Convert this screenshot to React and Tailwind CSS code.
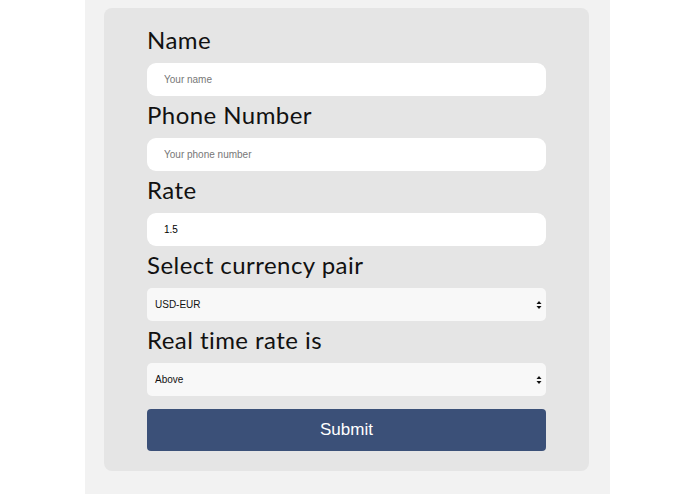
import React from "react";

const labelCls =
  "block pt-1 pb-2 text-[24px] leading-[30px] tracking-[0.45px] text-[#111] font-normal [font-variant-ligatures:none]";

function Arrows() {
  return (
    <svg width="6" height="9" viewBox="0 0 6 9" className="absolute right-[4px] top-1/2 -translate-y-1/2 pointer-events-none">
      <path d="M3 0.5 L5.5 3.6 L0.5 3.6 Z" fill="#111" />
      <path d="M3 8.5 L5.5 5.4 L0.5 5.4 Z" fill="#111" />
    </svg>
  );
}

export default function App() {
  return (
    <div className="w-[695px] h-[494px] bg-white flex" style={{ fontFamily: "Lato, 'Noto Sans', sans-serif" }}>
      <div className="ml-[85px] w-[525px] h-[494px] bg-[#f2f2f2] pt-2 pl-[19px]">
        <div className="w-[485px] bg-[#e5e5e5] rounded-[8px] pt-[13px] pb-[20px] px-[43px]">
          <label className={labelCls}>Name</label>
          <input
            className="block w-[399px] h-[33px] rounded-[9px] bg-white px-[17px] text-[10px] text-black placeholder:text-[#777] outline-none"
            placeholder="Your name"
            style={{ fontFamily: "'Liberation Sans', Arial, sans-serif" }}
          />
          <label className={labelCls}>Phone Number</label>
          <input
            className="block w-[399px] h-[33px] rounded-[9px] bg-white px-[17px] text-[10px] text-black placeholder:text-[#777] outline-none"
            placeholder="Your phone number"
            style={{ fontFamily: "'Liberation Sans', Arial, sans-serif" }}
          />
          <label className={labelCls}>Rate</label>
          <input
            className="block w-[399px] h-[33px] rounded-[9px] bg-white px-[17px] text-[10px] text-black outline-none"
            defaultValue="1.5"
            style={{ fontFamily: "'Liberation Sans', Arial, sans-serif" }}
          />
          <label className={labelCls}>Select currency pair</label>
          <div className="relative w-[399px] h-[33px] rounded-[5px] bg-[#f8f8f8] flex items-center px-[8px]">
            <span className="text-[10px] text-[#111]" style={{ fontFamily: "'Liberation Sans', Arial, sans-serif" }}>USD-EUR</span>
            <Arrows />
          </div>
          <label className={labelCls}>Real time rate is</label>
          <div className="relative w-[399px] h-[33px] rounded-[5px] bg-[#f8f8f8] flex items-center px-[8px]">
            <span className="text-[10px] text-[#111]" style={{ fontFamily: "'Liberation Sans', Arial, sans-serif" }}>Above</span>
            <Arrows />
          </div>
          <button
            className="mt-[13px] block w-[399px] h-[42px] rounded-[4px] bg-[#3b5078] text-white text-[17px] text-center"
            style={{ fontFamily: "'Liberation Sans', Arial, sans-serif" }}
          >
            Submit
          </button>
        </div>
      </div>
    </div>
  );
}
